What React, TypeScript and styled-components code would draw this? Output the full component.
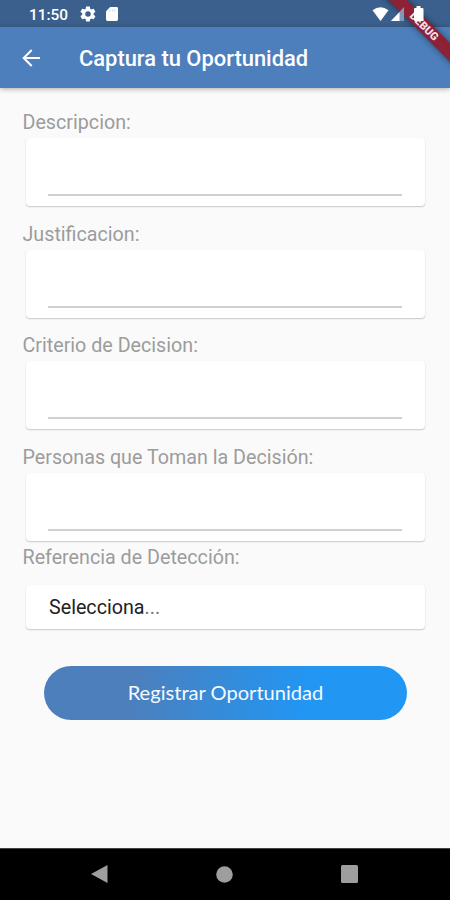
import React from "react";
import styled, { createGlobalStyle } from "styled-components";

const GlobalStyle = createGlobalStyle`
  * { box-sizing: border-box; }
  body { margin: 0; background: #fafafa; }
`;

const Screen = styled.div`
  position: relative;
  display: flex;
  flex-direction: column;
  width: 450px;
  height: 900px;
  overflow: hidden;
  background: #fafafa;
  font-family: Roboto, "Liberation Sans", sans-serif;
`;

const StatusBar = styled.div`
  display: flex;
  align-items: center;
  flex: none;
  height: 27px;
  padding: 1px 26px 0 29px;
  background: #3b608d;
  color: #fff;
`;

const Clock = styled.span`
  width: 51px;
  padding-top: 1px;
  font-size: 15.4px;
  font-weight: 500;
  line-height: 26px;
`;

const StatusIcons = styled.div`
  display: flex;
  align-items: center;
  gap: 10px;
  padding-bottom: 1px;
  svg { display: block; }
`;

const SignalIcons = styled(StatusIcons)`
  position: relative;
  z-index: 3;
  margin-left: auto;
  gap: 2px;
`;

const AppBar = styled.header`
  display: flex;
  align-items: center;
  flex: none;
  height: 61px;
  padding-left: 22px;
  background: #4d7fbc;
  color: #fff;
  box-shadow: 0 1px 5px rgba(0, 0, 0, 0.32);
  z-index: 1;
`;

const BackButton = styled.button`
  display: flex;
  width: 57px;
  padding: 0;
  border: 0;
  background: none;
  color: inherit;
`;

const Title = styled.h1`
  margin: 2px 0 0;
  font-size: 21.9px;
  font-weight: 500;
  line-height: 26px;
  white-space: nowrap;
`;

const DebugBanner = styled.div`
  position: absolute;
  z-index: 2;
  top: 20px;
  left: 374px;
  width: 100px;
  height: 13px;
  transform: rotate(45deg);
  background: #8d2136;
  box-shadow: 0 0 6px rgba(0, 0, 0, 0.5);
  color: #f0dfe5;
  font-size: 11px;
  font-weight: 900;
  line-height: 13px;
  text-align: center;
`;

const Form = styled.main`
  display: flex;
  flex-direction: column;
  flex: 1;
  padding: 23px 25px 0 26px;
`;

const Field = styled.label<{ $gap: number }>`
  display: block;
  margin-bottom: ${(p) => p.$gap}px;
`;

const Label = styled.span<{ $space: number }>`
  display: block;
  height: 24px;
  margin: 0 0 ${(p) => p.$space}px -3.5px;
  color: #9c9c9c;
  font-size: 19.7px;
  line-height: 24px;
  white-space: nowrap;
`;

const Card = styled.div<{ $height: number }>`
  height: ${(p) => p.$height}px;
  padding: 0 22px;
  border-radius: 4px;
  background: #fff;
  box-shadow: 0 1px 1.5px rgba(0, 0, 0, 0.2), 0 0 1px rgba(0, 0, 0, 0.07);
`;

const Input = styled.input`
  display: block;
  width: 354px;
  height: 58px;
  padding: 0;
  border: 0;
  border-bottom: 2px solid #d0d0d0;
  outline: 0;
  background: none;
  font: 19px Roboto, sans-serif;
`;

const SelectValue = styled.span`
  display: block;
  padding-left: 1px;
  color: #222;
  font-size: 19.7px;
  line-height: 45px;
`;

const Dots = styled.span`
  color: #777;
`;

const Submit = styled.button`
  width: 363px;
  height: 54px;
  margin-left: 18px;
  padding: 0 0 3px;
  border: 0;
  border-radius: 27px;
  background: linear-gradient(100deg, #4d7fbc 24%, #2196f3 72%);
  color: #f5faff;
  font: 400 20.1px Lato, sans-serif;
`;

const NavBar = styled.nav`
  display: flex;
  align-items: center;
  justify-content: space-between;
  flex: none;
  height: 52px;
  padding: 0 92px 1px 91px;
  border-top: 1px solid #444;
  background: #000;
  svg { display: block; }
`;

const fields = [
  { label: "Descripcion:", gap: 17 },
  { label: "Justificacion:", gap: 16 },
  { label: "Criterio de Decision:", gap: 17 },
  { label: "Personas que Toman la Decisión:", gap: 5 },
];

export default function App() {
  return (
    <Screen>
      <GlobalStyle />
      <StatusBar>
        <Clock>11:50</Clock>
        <StatusIcons>
          <svg width="16" height="16" viewBox="1.5 1.5 21 21" fill="#fff">
            <path d="M19.4 13c.1-.6.1-1.3 0-2l2.1-1.6c.2-.2.2-.5.1-.7l-2-3.4c-.1-.2-.4-.3-.6-.2l-2.5 1a7.3 7.3 0 0 0-1.7-1l-.4-2.6c0-.3-.2-.5-.5-.5h-4c-.3 0-.5.2-.5.5L9 5.1a7.3 7.3 0 0 0-1.7 1l-2.500-1c-.2-.1-.5 0-.6.2l-2 3.400c-.1.2-.1.5.1.7L4.5 11a8 8 0 0 0 0 2l-2.200 1.600c-.2.2-.2.5-.1.7l2 3.400c.1.2.4.3.6.2l2.500-1c.5.4 1.1.7 1.700 1l.4 2.600c0 .3.2.5.5.5h4c.3 0 .5-.2.5-.5l.4-2.600c.6-.3 1.200-.6 1.700-1l2.500 1c.2.1.5 0 .6-.2l2-3.400c.1-.2.1-.5-.1-.7zM12 15.600a3.600 3.600 0 1 1 0-7.200 3.600 3.600 0 0 1 0 7.200z" />
          </svg>
          <svg width="12" height="14" viewBox="0 0 13 15">
            <path d="M4.5 0H11.5Q13 0 13 1.5V13.5Q13 15 11.5 15H1.5Q0 15 0 13.5V4.5Z" fill="#fff" />
            <path d="M4.5 2.5V5M7 2.5V5M9.5 2.5V5" stroke="#cbd5e4" strokeWidth="1" />
          </svg>
        </StatusIcons>
        <SignalIcons>
          <svg width="17" height="14" viewBox="0 0 17 14">
            <path d="M0.500 3.300Q8.500-2.800 16.500 3.300L8.500 14Z" fill="#fff" />
          </svg>
          <svg width="13" height="14" viewBox="0 0 13 14">
            <path d="M13 0V14H0Z" fill="#7f98b8" />
            <path d="M8.500 5V14H0Z" fill="#fff" />
          </svg>
          <svg width="18" height="15" viewBox="0 0 18 15">
            <path d="M10.500 0H14.500V2H16Q17.500 2 17.500 3V14Q17.500 15 16.500 15H9Q8 15 8 14V3Q8 2 9 2H10.500Z" fill="#fff" />
          </svg>
        </SignalIcons>
      </StatusBar>
      <AppBar>
        <BackButton aria-label="Volver">
          <svg width="18" height="18" viewBox="0 0 18 18" fill="none" stroke="#fff" strokeWidth="2">
            <path d="M18 9H2M9.7 1L1.7 9L9.7 17" />
          </svg>
        </BackButton>
        <Title>Captura tu Oportunidad</Title>
      </AppBar>
      <DebugBanner>DEBUG</DebugBanner>
      <Form>
        {fields.map((f) => (
          <Field key={f.label} $gap={f.gap}>
            <Label $space={3}>{f.label}</Label>
            <Card $height={68}>
              <Input />
            </Card>
          </Field>
        ))}
        <Field as="div" $gap={37}>
          <Label $space={15}>Referencia de Detección:</Label>
          <Card $height={44}>
            <SelectValue>Selecciona<Dots>...</Dots></SelectValue>
          </Card>
        </Field>
        <Submit>Registrar Oportunidad</Submit>
      </Form>
      <NavBar>
        <svg width="17" height="18" viewBox="0 0 17 18"><path d="M16.5 0V18L0 9Z" fill="#9e9e9e" /></svg>
        <svg width="17" height="17" viewBox="0 0 17 17"><circle cx="8.5" cy="8.5" r="8.3" fill="#9e9e9e" /></svg>
        <svg width="17" height="18" viewBox="0 0 17 18"><rect width="17" height="18" rx="1.5" fill="#9e9e9e" /></svg>
      </NavBar>
    </Screen>
  );
}
